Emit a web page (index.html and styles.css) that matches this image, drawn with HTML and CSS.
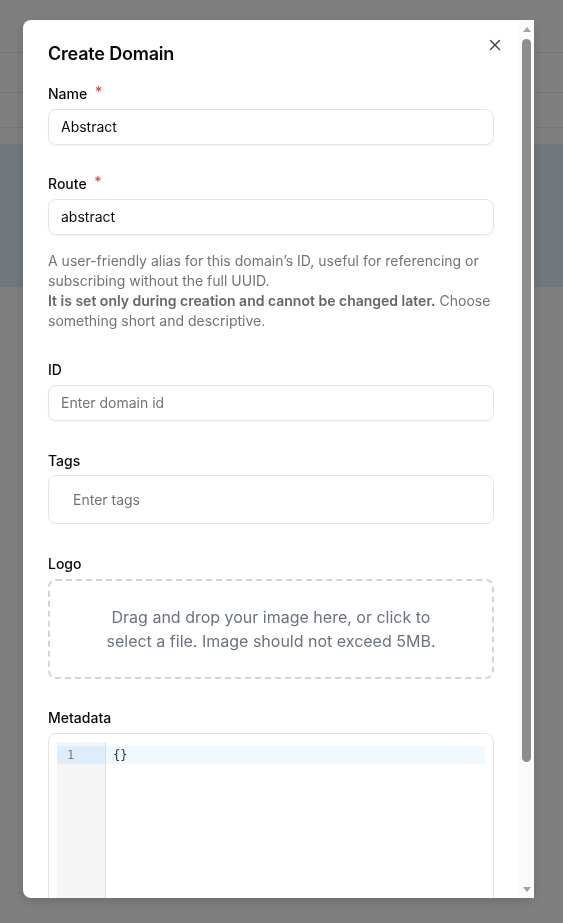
FILE: index.html
```html
<!DOCTYPE html>
<html lang="en">
<head>
<meta charset="utf-8">
<title>Create Domain</title>
<link rel="stylesheet" href="styles.css">
</head>
<body>
<div class="page">
  <div class="page-top"></div>
  <div class="page-row1"></div>
  <div class="page-row2"></div>
  <div class="page-band"></div>
</div>
<div class="overlay"></div>
<div class="modal" role="dialog" aria-label="Create Domain">
  <div class="modal-body">
    <div class="modal-head">
      <h2 class="title">Create Domain</h2>
      <button class="close" aria-label="Close">
        <svg width="12" height="12" viewBox="0 0 12 12"><path d="M1.5 1.5 L10.5 10.5 M10.5 1.5 L1.5 10.5" stroke="#3f3f46" stroke-width="1.4" stroke-linecap="round"/></svg>
      </button>
    </div>

    <div class="field field-first">
      <label class="label">Name <span class="req">*</span></label>
      <div class="input">Abstract</div>
    </div>

    <div class="field">
      <label class="label">Route <span class="req">*</span></label>
      <div class="input">abstract</div>
      <p class="help">A user-friendly alias for this domain’s ID, useful for referencing or subscribing without the full UUID.<br><strong>It is set only during creation and cannot be changed later.</strong> Choose something short and descriptive.</p>
    </div>

    <div class="field">
      <label class="label">ID</label>
      <div class="input placeholder">Enter domain id</div>
    </div>

    <div class="field field-wide">
      <label class="label">Tags</label>
      <div class="tags placeholder">Enter tags</div>
    </div>

    <div class="field field-wide">
      <label class="label">Logo</label>
      <div class="dropzone"><p class="drop-text">Drag and drop your image here, or click to select a file. Image should not exceed 5MB.</p></div>
    </div>

    <div class="field">
      <label class="label">Metadata</label>
      <div class="editor">
        <div class="editor-inner">
          <div class="gutter"><div class="gutter-line">1</div></div>
          <div class="code"><div class="code-line">{}</div></div>
        </div>
      </div>
    </div>
  </div>

  <div class="scrollbar" aria-hidden="true">
    <div class="sb-btn sb-up"><span class="tri-up"></span></div>
    <div class="sb-thumb"></div>
    <div class="sb-space"></div>
    <div class="sb-btn sb-down"><span class="tri-down"></span></div>
  </div>
</div>
</body>
</html>
```
FILE: styles.css
```css
* { box-sizing: border-box; }
html, body { margin: 0; padding: 0; }
body {
  width: 563px;
  height: 923px;
  overflow: hidden;
  background: #ffffff;
  font-family: Inter, "Noto Sans", sans-serif;
}
.page { display: flex; flex-direction: column; }
.page-top { height: 53px; border-bottom: 1px solid #ebebeb; }
.page-row1 { height: 40px; border-bottom: 1px solid #ebebeb; }
.page-row2 { height: 35px; border-bottom: 1px solid #ebebeb; }
.page-band { margin-top: 16px; height: 143px; background: #e4eef8; }

.overlay {
  position: fixed;
  inset: 0;
  background: rgba(0, 0, 0, 0.5);
}

.modal {
  position: fixed;
  left: 23px;
  top: 20px;
  width: 511px;
  height: 878px;
  background: #ffffff;
  border-radius: 8px 0 0 8px;
  overflow: hidden;
  display: flex;
  box-shadow: 0 4px 12px rgba(0, 0, 0, 0.15);
  color: #0a0a0a;
}

.modal-body {
  flex: 1;
  min-width: 0;
  overflow: hidden;
  padding: 20px 25px 24px 25px;
}

.modal-head {
  display: flex;
  justify-content: space-between;
  align-items: center;
  height: 28px;
}
.title {
  margin: 0;
  font-size: 18px;
  line-height: 28px;
  font-weight: 600;
  letter-spacing: -0.2px;
}
.close {
  border: 0;
  background: transparent;
  padding: 0;
  width: 12px;
  height: 12px;
  margin-right: -7px;
  margin-top: -18px;
  display: flex;
}

.field { margin-top: 28px; display: flex; flex-direction: column; }
.field-first { margin-top: 15px; }
.field-wide { margin-top: 29px; }

.label {
  font-size: 14px;
  line-height: 20px;
  padding-top: 1px;
  font-weight: 500;
  margin-bottom: 5px;
}
.req { color: #ef4444; margin-left: 4px; position: relative; top: -2px; }

.input {
  height: 36px;
  border: 1px solid #e4e4e7;
  border-radius: 8px;
  padding: 0 12px;
  font-size: 14px;
  line-height: 34px;
  color: #0a0a0a;
  box-shadow: 0 1px 2px rgba(0, 0, 0, 0.05);
}
.placeholder { color: #737373; }

.help {
  margin: 16px 0 0 0;
  font-size: 14px;
  line-height: 20px;
  color: #737373;
}
.help strong { font-weight: 600; color: #666666; }

.tags {
  height: 49px;
  margin-top: -1px;
  border: 1px solid #e4e4e7;
  border-radius: 8px;
  padding: 0 24px;
  font-size: 14px;
  line-height: 47px;
}

.dropzone {
  height: 100px;
  border: 2px dashed #d1d5db;
  border-radius: 8px;
  display: flex;
  align-items: center;
  justify-content: center;
}
.drop-text {
  margin: 0;
  max-width: 345px;
  text-align: center;
  font-size: 16px;
  line-height: 24px;
  color: #6b7280;
}

.editor {
  height: 220px;
  border: 1px solid #e4e4e7;
  border-radius: 8px;
  padding: 8px;
}
.editor-inner { display: flex; height: 100%; }
.gutter {
  width: 49px;
  background: #f5f5f5;
  border-right: 1px solid #dddddd;
  padding-top: 4px;
}
.gutter-line {
  height: 18px;
  line-height: 18px;
  padding-left: 10px;
  background: #ddeefa;
  font-family: "DejaVu Sans Mono", monospace;
  font-size: 12px;
  color: #7a7a7a;
}
.code { flex: 1; padding-top: 4px; }
.code-line {
  height: 18px;
  line-height: 18px;
  padding-left: 7px;
  background: #f0f9ff;
  font-family: "DejaVu Sans Mono", monospace;
  font-size: 12px;
  color: #1f2937;
}

.scrollbar {
  width: 15px;
  flex: none;
  display: flex;
  flex-direction: column;
  align-items: center;
  background: #fafafa;
}
.sb-btn { height: 16px; display: flex; justify-content: center; }
.sb-up { align-items: flex-start; padding-top: 7px; }
.sb-down { align-items: flex-end; padding-bottom: 6px; }
.tri-up {
  width: 0; height: 0;
  border-left: 4.5px solid transparent;
  border-right: 4.5px solid transparent;
  border-bottom: 5px solid #a3a3a3;
}
.tri-down {
  width: 0; height: 0;
  border-left: 4.5px solid transparent;
  border-right: 4.5px solid transparent;
  border-top: 5px solid #a3a3a3;
}
.sb-thumb {
  margin-top: 3px;
  width: 9px;
  height: 723px;
  border-radius: 4.5px;
  background: #8d8d8d;
}
.sb-space { flex: 1; }
```
